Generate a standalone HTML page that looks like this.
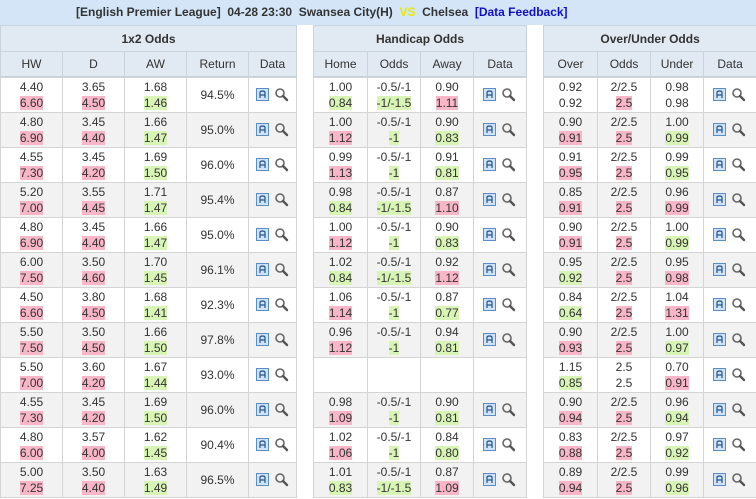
<!DOCTYPE html>
<html><head><meta charset="utf-8"><style>
*{margin:0;padding:0;box-sizing:border-box}
body{width:756px;height:499px;overflow:hidden;background:#fff;font-family:"Liberation Sans",Arial,sans-serif;font-size:12px;color:#333}
.top{height:25px;background:#d3e5f7;text-align:left;line-height:25px;font-weight:bold;font-size:12px;color:#333;padding-left:76px;white-space:nowrap}
.top .vs{color:#e8e800}.top .fb{color:#1010c0}
table{border-collapse:collapse;table-layout:fixed;width:756px}
td{border:1px solid #d4d4d4;text-align:center;vertical-align:middle;padding:0}
tr.h1 td{height:26px;background:#e1e9f3;font-weight:bold;border-color:#c9d3de}
tr.h2 td{height:25px;background:#e1e9f3;border-color:#c9d3de}
tr.r td{height:35px;line-height:16px}
tr.r:nth-child(even) td{background:#f2f2f2}
td.gap,tr.r:nth-child(even) td.gap,tr.h1 td.gap,tr.h2 td.gap{background:#fff;border-top:none;border-bottom:none}
.p{background:#f8b6c8}.g{background:#d8f5b6}
.ic{display:inline-block;vertical-align:middle}
</style></head><body>
<div class="top">[English Premier League]&nbsp; 04-28 23:30&nbsp; Swansea City(H)&nbsp; <span class="vs">VS</span>&nbsp; Chelsea&nbsp; <span class="fb">[Data Feedback]</span></div>
<table>
<colgroup><col style="width:62px"><col style="width:62px"><col style="width:62px"><col style="width:62px"><col style="width:48px"><col style="width:17px"><col style="width:54px"><col style="width:53px"><col style="width:53px"><col style="width:53px"><col style="width:17px"><col style="width:54px"><col style="width:53px"><col style="width:53px"><col style="width:53px"></colgroup>
<tr class="h1"><td colspan="5">1x2 Odds</td><td class="gap"></td><td colspan="4">Handicap Odds</td><td class="gap"></td><td colspan="4">Over/Under Odds</td></tr>
<tr class="h2"><td>HW</td><td>D</td><td>AW</td><td>Return</td><td>Data</td><td class="gap"></td><td>Home</td><td>Odds</td><td>Away</td><td>Data</td><td class="gap"></td><td>Over</td><td>Odds</td><td>Under</td><td>Data</td></tr>
</table>
<table id="t">
<colgroup><col style="width:62px"><col style="width:62px"><col style="width:62px"><col style="width:62px"><col style="width:48px"><col style="width:17px"><col style="width:54px"><col style="width:53px"><col style="width:53px"><col style="width:53px"><col style="width:17px"><col style="width:54px"><col style="width:53px"><col style="width:53px"><col style="width:53px"></colgroup>
<tbody>
<tr class="r"><td>4.40<br><span class="p">6.60</span></td><td>3.65<br><span class="p">4.50</span></td><td>1.68<br><span class="g">1.46</span></td><td>94.5%</td><td class="d"></td><td class="gap"></td><td>1.00<br><span class="g">0.84</span></td><td>-0.5/-1<br><span class="g">-1/-1.5</span></td><td>0.90<br><span class="p">1.11</span></td><td class="d"></td><td class="gap"></td><td>0.92<br>0.92</td><td>2/2.5<br><span class="p">2.5</span></td><td>0.98<br>0.98</td><td class="d"></td></tr>
<tr class="r"><td>4.80<br><span class="p">6.90</span></td><td>3.45<br><span class="p">4.40</span></td><td>1.66<br><span class="g">1.47</span></td><td>95.0%</td><td class="d"></td><td class="gap"></td><td>1.00<br><span class="p">1.12</span></td><td>-0.5/-1<br><span class="g">-1</span></td><td>0.90<br><span class="g">0.83</span></td><td class="d"></td><td class="gap"></td><td>0.90<br><span class="p">0.91</span></td><td>2/2.5<br><span class="p">2.5</span></td><td>1.00<br><span class="g">0.99</span></td><td class="d"></td></tr>
<tr class="r"><td>4.55<br><span class="p">7.30</span></td><td>3.45<br><span class="p">4.20</span></td><td>1.69<br><span class="g">1.50</span></td><td>96.0%</td><td class="d"></td><td class="gap"></td><td>0.99<br><span class="p">1.13</span></td><td>-0.5/-1<br><span class="g">-1</span></td><td>0.91<br><span class="g">0.81</span></td><td class="d"></td><td class="gap"></td><td>0.91<br><span class="p">0.95</span></td><td>2/2.5<br><span class="p">2.5</span></td><td>0.99<br><span class="g">0.95</span></td><td class="d"></td></tr>
<tr class="r"><td>5.20<br><span class="p">7.00</span></td><td>3.55<br><span class="p">4.45</span></td><td>1.71<br><span class="g">1.47</span></td><td>95.4%</td><td class="d"></td><td class="gap"></td><td>0.98<br><span class="g">0.84</span></td><td>-0.5/-1<br><span class="g">-1/-1.5</span></td><td>0.87<br><span class="p">1.10</span></td><td class="d"></td><td class="gap"></td><td>0.85<br><span class="p">0.91</span></td><td>2/2.5<br><span class="p">2.5</span></td><td>0.96<br><span class="p">0.99</span></td><td class="d"></td></tr>
<tr class="r"><td>4.80<br><span class="p">6.90</span></td><td>3.45<br><span class="p">4.40</span></td><td>1.66<br><span class="g">1.47</span></td><td>95.0%</td><td class="d"></td><td class="gap"></td><td>1.00<br><span class="p">1.12</span></td><td>-0.5/-1<br><span class="g">-1</span></td><td>0.90<br><span class="g">0.83</span></td><td class="d"></td><td class="gap"></td><td>0.90<br><span class="p">0.91</span></td><td>2/2.5<br><span class="p">2.5</span></td><td>1.00<br><span class="g">0.99</span></td><td class="d"></td></tr>
<tr class="r"><td>6.00<br><span class="p">7.50</span></td><td>3.50<br><span class="p">4.60</span></td><td>1.70<br><span class="g">1.45</span></td><td>96.1%</td><td class="d"></td><td class="gap"></td><td>1.02<br><span class="g">0.84</span></td><td>-0.5/-1<br><span class="g">-1/-1.5</span></td><td>0.92<br><span class="p">1.12</span></td><td class="d"></td><td class="gap"></td><td>0.95<br><span class="g">0.92</span></td><td>2/2.5<br><span class="p">2.5</span></td><td>0.95<br><span class="p">0.98</span></td><td class="d"></td></tr>
<tr class="r"><td>4.50<br><span class="p">6.60</span></td><td>3.80<br><span class="p">4.50</span></td><td>1.68<br><span class="g">1.41</span></td><td>92.3%</td><td class="d"></td><td class="gap"></td><td>1.06<br><span class="p">1.14</span></td><td>-0.5/-1<br><span class="g">-1</span></td><td>0.87<br><span class="g">0.77</span></td><td class="d"></td><td class="gap"></td><td>0.84<br><span class="g">0.64</span></td><td>2/2.5<br><span class="p">2.5</span></td><td>1.04<br><span class="p">1.31</span></td><td class="d"></td></tr>
<tr class="r"><td>5.50<br><span class="p">7.50</span></td><td>3.50<br><span class="p">4.50</span></td><td>1.66<br><span class="g">1.50</span></td><td>97.8%</td><td class="d"></td><td class="gap"></td><td>0.96<br><span class="p">1.12</span></td><td>-0.5/-1<br><span class="g">-1</span></td><td>0.94<br><span class="g">0.81</span></td><td class="d"></td><td class="gap"></td><td>0.90<br><span class="p">0.93</span></td><td>2/2.5<br><span class="p">2.5</span></td><td>1.00<br><span class="g">0.97</span></td><td class="d"></td></tr>
<tr class="r"><td>5.50<br><span class="p">7.00</span></td><td>3.60<br><span class="p">4.20</span></td><td>1.67<br><span class="g">1.44</span></td><td>93.0%</td><td class="d"></td><td class="gap"></td><td></td><td></td><td></td><td></td><td class="gap"></td><td>1.15<br><span class="g">0.85</span></td><td>2.5<br>2.5</td><td>0.70<br><span class="p">0.91</span></td><td class="d"></td></tr>
<tr class="r"><td>4.55<br><span class="p">7.30</span></td><td>3.45<br><span class="p">4.20</span></td><td>1.69<br><span class="g">1.50</span></td><td>96.0%</td><td class="d"></td><td class="gap"></td><td>0.98<br><span class="p">1.09</span></td><td>-0.5/-1<br><span class="g">-1</span></td><td>0.90<br><span class="g">0.81</span></td><td class="d"></td><td class="gap"></td><td>0.90<br><span class="p">0.94</span></td><td>2/2.5<br><span class="p">2.5</span></td><td>0.96<br><span class="g">0.94</span></td><td class="d"></td></tr>
<tr class="r"><td>4.80<br><span class="p">6.00</span></td><td>3.57<br><span class="p">4.00</span></td><td>1.62<br><span class="g">1.45</span></td><td>90.4%</td><td class="d"></td><td class="gap"></td><td>1.02<br><span class="p">1.06</span></td><td>-0.5/-1<br><span class="g">-1</span></td><td>0.84<br><span class="g">0.80</span></td><td class="d"></td><td class="gap"></td><td>0.83<br><span class="p">0.88</span></td><td>2/2.5<br><span class="p">2.5</span></td><td>0.97<br><span class="g">0.92</span></td><td class="d"></td></tr>
<tr class="r"><td>5.00<br><span class="p">7.25</span></td><td>3.50<br><span class="p">4.40</span></td><td>1.63<br><span class="g">1.49</span></td><td>96.5%</td><td class="d"></td><td class="gap"></td><td>1.01<br><span class="g">0.83</span></td><td>-0.5/-1<br><span class="g">-1/-1.5</span></td><td>0.87<br><span class="p">1.09</span></td><td class="d"></td><td class="gap"></td><td>0.89<br><span class="p">0.94</span></td><td>2/2.5<br><span class="p">2.5</span></td><td>0.99<br><span class="g">0.96</span></td><td class="d"></td></tr>
</tbody></table>
<script>
document.querySelectorAll('td.d').forEach(function(td){
 if(td.innerHTML.trim()==='') td.innerHTML='<svg class="ic" width="36" height="16" viewBox="0 0 36 16"><rect x="1.5" y="1.5" width="12" height="12" fill="#cfe4fa" stroke="#5a8cc8"/><path d="M5 11V5.5Q5 4 7.5 4Q10 4 10 5.5V11M5 8H10" fill="none" stroke="#24548c" stroke-width="1.2"/><circle cx="25" cy="6" r="4" fill="none" stroke="#666" stroke-width="1.6"/><path d="M28 9L32 13" stroke="#555" stroke-width="2.4" stroke-linecap="round"/></svg>';
});
</script>
</body></html>
